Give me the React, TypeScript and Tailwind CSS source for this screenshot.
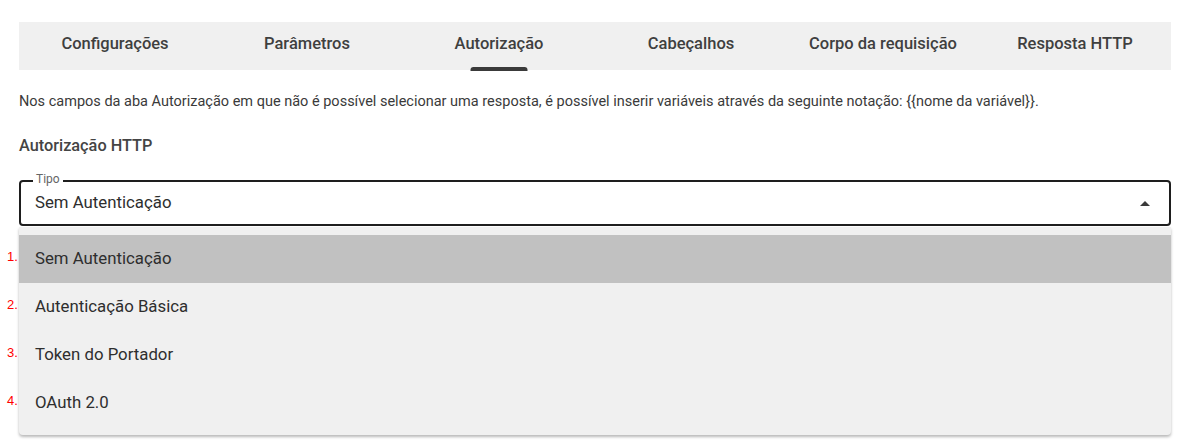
import { useState } from 'react';

const tabs = [
    'Configurações',
    'Parâmetros',
    'Autorização',
    'Cabeçalhos',
    'Corpo da requisição',
    'Resposta HTTP',
];

const options = [
    'Sem Autenticação',
    'Autenticação Básica',
    'Token do Portador',
    'OAuth 2.0',
];

export default function App() {
    const [active] = useState(2);
    const [selected] = useState(0);

    return (
        <div className="min-h-[448px] bg-white pt-[22px] px-[19px] font-['Roboto',sans-serif] text-[#333]">
            {/* Tabs */}
            <div className="grid grid-cols-6 h-12 bg-[#f0f0f0]">
                {tabs.map((tab, i) => (
                    <div key={tab} className="relative flex items-center justify-center pb-[3px]">
                        <span className="text-[16.5px] font-medium text-[#3f3f3f]">{tab}</span>
                        {i === active && (
                            <span className="absolute left-1/2 -translate-x-1/2 top-[45px] w-[57px] h-[4px] rounded-t-[3px] bg-[#3a3a3a]" />
                        )}
                    </div>
                ))}
            </div>

            <p className="mt-[23px] text-[14.5px] leading-[17px] text-[#3a3a3a]">
                Nos campos da aba Autorização em que não é possível selecionar uma resposta, é possível inserir variáveis através da seguinte notação: {'{{nome da variável}}'}.
            </p>

            <h3 className="mt-[26px] text-[16.3px] leading-[19px] font-medium text-[#444]">
                Autorização HTTP
            </h3>

            {/* Select */}
            <div className="relative mt-[25px] h-[46px] border-2 border-[#1e1e1e] rounded-[4px] flex items-center pl-[14px] pr-[16px]">
                <span className="absolute -top-[10px] left-[12px] px-[3px] bg-white text-[12px] leading-[14px] text-[#666]">
                    Tipo
                </span>
                <span className="flex-1 text-[16.8px] text-[#2e2e2e]">{options[selected]}</span>
                <svg width="10" height="5" viewBox="0 0 10 5" className="mr-[3px] mt-[1px]">
                    <path d="M0 5 L5 0 L10 5 Z" fill="#3a3a3a" />
                </svg>
            </div>

            {/* Menu */}
            <div className="mt-px py-[8px] bg-[#f0f0f0] rounded-b-[4px] shadow-[0_2px_3px_rgba(0,0,0,0.28)]">
                {options.map((opt, i) => (
                    <div
                        key={opt}
                        className={`relative h-12 flex items-center px-[16px] text-[16.8px] text-[#2e2e2e] ${
                            i === selected ? 'bg-[#c1c1c1]' : ''
                        }`}
                    >
                        <span className="absolute -left-[12px] top-[14px] text-[13px] leading-[15px] text-[#ff0000] font-['Liberation_Sans',sans-serif]">
                            {i + 1}.
                        </span>
                        {opt}
                    </div>
                ))}
            </div>
        </div>
    );
}
